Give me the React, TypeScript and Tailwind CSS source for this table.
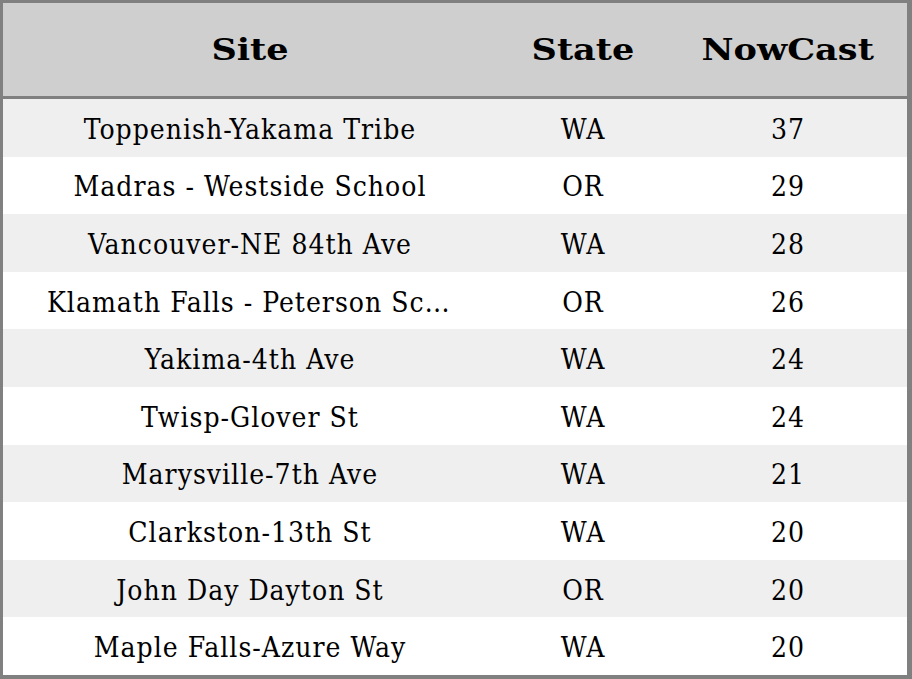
const rows = [
  { site: 'Toppenish-Yakama Tribe', state: 'WA', value: 37 },
  { site: 'Madras - Westside School', state: 'OR', value: 29 },
  { site: 'Vancouver-NE 84th Ave', state: 'WA', value: 28 },
  { site: 'Klamath Falls - Peterson School', state: 'OR', value: 26 },
  { site: 'Yakima-4th Ave', state: 'WA', value: 24 },
  { site: 'Twisp-Glover St', state: 'WA', value: 24 },
  { site: 'Marysville-7th Ave', state: 'WA', value: 21 },
  { site: 'Clarkston-13th St', state: 'WA', value: 20 },
  { site: 'John Day Dayton St', state: 'OR', value: 20 },
  { site: 'Maple Falls-Azure Way', state: 'WA', value: 20 },
];

const cols = 'grid grid-cols-[494px_172px_1fr] items-center';

export default function App() {
  return (
    <div className="w-[912px] h-[679px] overflow-hidden bg-white text-black font-['DejaVu_Serif',serif]">
      <div className="border-t-[3px] border-l-[3px] border-r-[5px] border-b-[4px] border-[#808080] flex flex-col">
        {/* Header */}
        <div className={`h-[96px] bg-[#cfcfcf] border-b-[3px] border-[#808080] ${cols} text-[30px] font-bold`}>
          <div className="flex justify-center">
            <span className="inline-block scale-x-[1.17]">Site</span>
          </div>
          <div className="flex justify-center">
            <span className="inline-block scale-x-[1.17]">State</span>
          </div>
          <div className="flex justify-center">
            <span className="inline-block scale-x-[1.17]">NowCast</span>
          </div>
        </div>

        {/* Rows */}
        {rows.map((r, i) => (
          <div
            key={i}
            className={`h-[57.6px] pt-[4px] ${cols} text-[28px] tracking-[1px] font-['DejaVu_Serif_Condensed','DejaVu_Serif',serif] ${
              i % 2 === 0 ? 'bg-[#efefef]' : 'bg-white'
            }`}
          >
            <div className="text-center truncate px-[44px]">{r.site}</div>
            <div className="text-center">{r.state}</div>
            <div className="text-center">{r.value}</div>
          </div>
        ))}
      </div>
    </div>
  );
}
